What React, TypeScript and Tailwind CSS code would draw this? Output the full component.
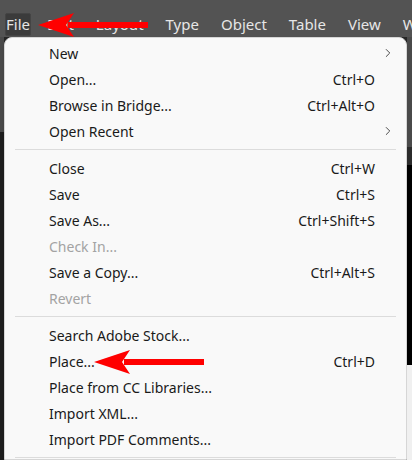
import React from 'react';
import { ChevronRight } from 'lucide-react';

type Item =
  | { sep: true }
  | { sep?: false; label: string; shortcut?: string; sub?: boolean; disabled?: boolean };

const items: Item[] = [
  { label: 'New', sub: true },
  { label: 'Open...', shortcut: 'Ctrl+O' },
  { label: 'Browse in Bridge...', shortcut: 'Ctrl+Alt+O' },
  { label: 'Open Recent', sub: true },
  { sep: true },
  { label: 'Close', shortcut: 'Ctrl+W' },
  { label: 'Save', shortcut: 'Ctrl+S' },
  { label: 'Save As...', shortcut: 'Ctrl+Shift+S' },
  { label: 'Check In...', disabled: true },
  { label: 'Save a Copy...', shortcut: 'Ctrl+Alt+S' },
  { label: 'Revert', disabled: true },
  { sep: true },
  { label: 'Search Adobe Stock...' },
  { label: 'Place...', shortcut: 'Ctrl+D' },
  { label: 'Place from CC Libraries...' },
  { label: 'Import XML...' },
  { label: 'Import PDF Comments...' },
  { sep: true },
];

const menus = ['Edit', 'Layout', 'Type', 'Object', 'Table', 'View', 'Window'];

// Red annotation arrow pointing left
function Arrow({ className }: { className?: string }) {
  return (
    <svg className={className} viewBox="0 0 110 24" fill="none">
      <rect x="30" y="9" width="80" height="6" fill="#ff0000" />
      <path d="M0 12 L36 0 L28 12 L36 24 Z" fill="#ff0000" />
    </svg>
  );
}

export default function App() {
  return (
    <div
      className="relative w-[412px] h-[460px] overflow-hidden bg-[#262626] flex flex-col"
      style={{ fontFamily: '"Noto Sans", "Open Sans", sans-serif' }}
    >
      {/* Menu bar */}
      <div className="h-[37px] shrink-0 bg-[#535353] flex items-end pl-[5px] pb-[1px] text-[15px] text-[#e6e6e6] whitespace-nowrap">
        <div className="h-[23px] w-[41px] flex items-center justify-center bg-[#3b3b3b] border border-[#444] rounded-[2px]">
          File
        </div>
        <div className="h-[23px] flex items-center gap-[22px] ml-[16px]">
          {menus.map((m) => (
            <span key={m}>{m}</span>
          ))}
        </div>
      </div>

      <div className="flex flex-1 min-h-0">
        {/* left background strip */}
        <div className="w-[4px] flex flex-col shrink-0">
          <div className="h-[95px] bg-[#4a4a4a]" />
          <div className="flex-1 bg-[#1e1e1e]" />
        </div>

        {/* File menu */}
        <div className="w-[403px] shrink-0 bg-[#f9f9f9] border border-[#d6d6d6] rounded-t-[8px] pt-[2px] text-[14px] text-[#1a1a1a] shadow-md">
          {items.map((it, i) =>
            it.sep ? (
              <div key={i} className="h-[11px] flex items-center px-[10px]">
                <div className="h-px w-full bg-[#dcdcdc]" />
              </div>
            ) : (
              <div key={i} className="h-[26px] flex items-center pl-[44px]">
                <span className={it.disabled ? 'flex-1 text-[#a3a3a3]' : 'flex-1'}>{it.label}</span>
                {it.shortcut && <span>{it.shortcut}</span>}
                <div className="w-[31px] flex items-center pl-[6px]">
                  {it.sub && <ChevronRight className="w-[14px] h-[14px] text-[#333]" strokeWidth={1.5} />}
                </div>
              </div>
            )
          )}
        </div>

        {/* right background strip */}
        <div className="flex-1 flex flex-col">
          <div className="h-[110px] bg-[#4a4a4a]" />
          <div className="h-[18px] bg-[#2b2b2b]" />
          <div className="h-[200px] bg-black" />
          <div className="flex-1 bg-[#f0f0f0]" />
        </div>
      </div>

      {/* annotation arrows */}
      <Arrow className="absolute left-[38px] top-[13px] w-[110px] h-[24px]" />
      <Arrow className="absolute left-[94px] top-[350px] w-[110px] h-[24px]" />
    </div>
  );
}
